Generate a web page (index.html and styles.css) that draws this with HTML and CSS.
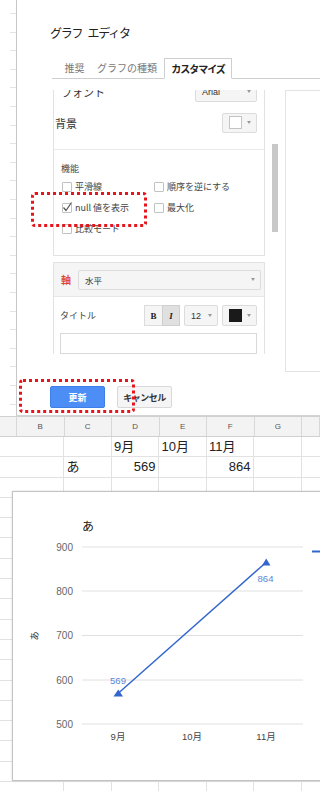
FILE: index.html
```html
<!DOCTYPE html>
<html lang="ja">
<head>
  <meta charset="UTF-8">
  <title>グラフ エディタ</title>
  <link rel="stylesheet" href="styles.css">
</head>
<body>
  <div class="page">

    <!-- dialog over the sheet -->
    <div class="top">
      <div class="sheet-edge"></div>
      <div class="editor">
        <div class="editor-title">グラフ<span class="gap"></span>エディタ</div>

        <div class="tabs">
          <div class="tab tab-1">推奨</div>
          <div class="tab tab-2">グラフの種類</div>
          <div class="tab active">カスタマイズ</div>
        </div>

        <div class="editor-body">
          <div class="panel">
            <div class="panel-scroll">

              <!-- general section -->
              <div class="section section-first">
                <div class="section-top">
                  <div class="row">
                    <span class="row-label big">フォント</span>
                    <div class="select select-font">Arial<i class="caret"></i></div>
                  </div>
                  <div class="row">
                    <span class="row-label big tight">背景</span>
                    <div class="select select-color"><span class="swatch"></span><i class="caret"></i></div>
                  </div>
                </div>
                <div class="features">
                  <div class="features-title">機能</div>
                  <div class="checks">
                    <div class="check"><span class="box"></span>平滑線</div>
                    <div class="check"><span class="box"></span>順序を逆にする</div>
                    <div class="check">
                      <span class="box">
                        <svg width="11" height="11" viewBox="0 0 11 11"><path d="M1.5 5.5 L4 8.5 L9.5 0.5" fill="none" stroke="#555" stroke-width="1.2"/></svg>
                      </span>null 値を表示
                    </div>
                    <div class="check"><span class="box"></span>最大化</div>
                    <div class="check"><span class="box"></span>比較モード</div>
                  </div>
                </div>
              </div>

              <!-- axis section -->
              <div class="section section-axis">
                <div class="axis-head">
                  <span class="axis-label">軸</span>
                  <div class="select select-axis">水平<i class="caret"></i></div>
                </div>
                <div class="axis-body">
                  <div class="title-row">
                    <span class="row-label">タイトル</span>
                    <div class="tools">
                      <div class="tool-group">
                        <span class="tool tool-b">B</span>
                        <span class="tool tool-i on">I</span>
                      </div>
                      <div class="select select-size">12<i class="caret"></i></div>
                      <div class="select select-color"><span class="swatch black"></span><i class="caret"></i></div>
                    </div>
                  </div>
                  <div class="text-input"></div>
                </div>
              </div>

            </div>
            <div class="scrollbar"><div class="thumb"></div></div>
          </div>
          <div class="preview"></div>
        </div>

        <div class="buttons">
          <div class="btn btn-primary">更新</div>
          <div class="btn btn-default">キャンセル</div>
        </div>
      </div>
    </div>

    <!-- spreadsheet -->
    <div class="sheet">
      <div class="sheet-head">
        <span></span><span>B</span><span>C</span><span>D</span><span>E</span><span>F</span><span>G</span><span></span>
      </div>
      <div class="sheet-body">
        <div class="sheet-row">
          <span></span><span></span><span></span><span>9月</span><span>10月</span><span>11月</span><span></span><span></span>
        </div>
        <div class="sheet-row">
          <span></span><span></span><span>あ</span><span class="num">569</span><span></span><span class="num">864</span><span></span><span></span>
        </div>
      </div>
    </div>

    <!-- chart floating over the sheet -->
    <div class="chart">
      <svg width="330" height="288" viewBox="0 0 330 288">
        <text class="chart-title" x="69" y="38.5">あ</text>

        <g stroke="#e0e0e0" stroke-width="1">
          <line x1="69" y1="55" x2="290" y2="55"/>
          <line x1="69" y1="99" x2="290" y2="99"/>
          <line x1="69" y1="143.5" x2="290" y2="143.5"/>
          <line x1="69" y1="188" x2="290" y2="188"/>
          <line x1="69" y1="232" x2="290" y2="232"/>
        </g>

        <g class="y-labels" text-anchor="end">
          <text x="60" y="58.5">900</text>
          <text x="60" y="102.5">800</text>
          <text x="60" y="147">700</text>
          <text x="60" y="191.5">600</text>
          <text x="60" y="235.5">500</text>
        </g>

        <text class="axis-title" x="22" y="147" text-anchor="middle" transform="rotate(-90 22 144)">あ</text>

        <g class="x-labels" text-anchor="middle">
          <text x="105" y="247.5">9月</text>
          <text x="179" y="247.5">10月</text>
          <text x="253" y="247.5">11月</text>
        </g>

        <line x1="105" y1="201.5" x2="253" y2="70.5" stroke="#3366cc" stroke-width="1.5"/>
        <polygon points="100.5,204.5 110,204.5 105.3,197.5" fill="#3366cc"/>
        <polygon points="249,73.5 257.5,73.5 253.2,66.5" fill="#3366cc"/>

        <g class="point-labels" text-anchor="middle">
          <text x="105" y="191.5">569</text>
          <text x="252.5" y="89.5">864</text>
        </g>

        <line x1="299" y1="59.5" x2="312" y2="59.5" stroke="#3366cc" stroke-width="2"/>
      </svg>
    </div>

    <!-- red dotted highlights -->
    <div class="mark mark-null"></div>
    <div class="mark mark-update"></div>
  </div>
</body>
</html>
```

FILE: styles.css
```css
/* ===============================
   BASE
=============================== */
html, body {
  margin: 0;
  padding: 0;
  background: #fff;
}
body {
  width: 320px;
  height: 791px;
  overflow: hidden;
  font-family: "Noto Sans CJK JP", "Liberation Sans", sans-serif;
  color: #333;
}
.page {
  position: relative;
  width: 320px;
  height: 791px;
  overflow: hidden;
}

/* ===============================
   DIALOG
=============================== */
.top {
  display: flex;
  height: 416px;
}
.sheet-edge {
  width: 16px;
  background: repeating-linear-gradient(to bottom, transparent 0 13px, #e3e3e3 13px 14px, transparent 14px 18.6px) right top / 6px 100% no-repeat;
}
.editor {
  flex: 1;
  display: flex;
  flex-direction: column;
  padding-left: 33px;
  border-left: 1px solid #c9c9c9;
  border-bottom: 1px solid #d4d4d4;
  box-sizing: border-box;
}
.editor-title {
  display: flex;
  margin-top: 25px;
  height: 16px;
  line-height: 16px;
  font-size: 12px;
  letter-spacing: -1.2px;
  color: #222;
}
.editor-title .gap {
  width: 5px;
}

/* tabs */
.tabs {
  display: flex;
  align-items: flex-end;
  margin-top: 17px;
  margin-left: 2px;
  height: 21px;
  border-bottom: 1px solid #cfcfcf;
  box-sizing: border-box;
}
.tab {
  height: 20px;
  line-height: 20px;
  font-size: 10px;
  color: #777;
  text-align: center;
}
.tab-1 {
  margin-left: 4px;
  width: 37px;
}
.tab-2 {
  width: 68px;
}
.tab.active {
  width: 68px;
  height: 21px;
  margin-left: 3px;
  margin-bottom: -1px;
  border: 1px solid #cfcfcf;
  border-bottom-color: #fff;
  box-sizing: border-box;
  line-height: 19px;
  background: #fff;
  font-weight: bold;
  letter-spacing: -1px;
  color: #222;
}

/* body : settings panel + preview */
.editor-body {
  display: flex;
  margin-top: 11px;
  margin-left: 3px;
  height: 282px;
}
.panel {
  width: 227px;
  display: flex;
  overflow: hidden;
}
.panel-scroll {
  width: 212px;
  flex: none;
}
.scrollbar {
  width: 15px;
  padding-left: 7px;
  box-sizing: border-box;
}
.thumb {
  width: 6px;
  height: 88px;
  margin-top: 54px;
  background: #c8c8c8;
}
.preview {
  flex: 1;
  margin-left: 5px;
  border: 1px solid #e3e3e3;
  border-right: none;
}

/* sections */
.section {
  border-left: 1px solid #e2e2e2;
  border-right: 1px solid #e2e2e2;
}
.section-first {
  margin-top: -14px;
  border-bottom: 1px solid #e2e2e2;
}
.section-top {
  padding: 0 7px 11px 7px;
  border-bottom: 1px solid #ebebeb;
}
.row {
  display: flex;
  align-items: center;
  justify-content: space-between;
  height: 31px;
}
.row-label {
  font-size: 9px;
  color: #444;
}
.row-label.big {
  font-size: 11px;
  color: #333;
}
.row-label.tight {
  margin-left: -6px;
}

.select {
  display: flex;
  align-items: center;
  justify-content: space-between;
  height: 20px;
  padding: 0 5px 0 6px;
  box-sizing: border-box;
  background: #f5f5f5;
  border: 1px solid #dcdcdc;
  border-radius: 2px;
  font-family: "Liberation Sans", "Noto Sans CJK JP", sans-serif;
  font-size: 9px;
  color: #333;
}
.caret {
  width: 0;
  height: 0;
  border-top: 3px solid #999;
  border-left: 2px solid transparent;
  border-right: 2px solid transparent;
}
.select-font {
  width: 62px;
}
.select-color {
  width: 35px;
  padding-left: 6px;
}
.swatch {
  width: 11px;
  height: 11px;
  background: #fff;
  border: 1px solid #c4c4c4;
}
.swatch.black {
  background: #1a1a1a;
  border-color: #1a1a1a;
}

.features {
  padding: 12px 0 16px 7px;
}
.features-title {
  height: 14px;
  line-height: 14px;
  font-size: 9px;
  color: #444;
}
.checks {
  display: grid;
  grid-template-columns: 92px 1fr;
  grid-auto-rows: 21px;
}
.check {
  display: flex;
  align-items: center;
  gap: 3px;
  font-size: 9px;
  color: #444;
}
.box {
  position: relative;
  width: 10px;
  height: 10px;
  margin-left: 1px;
  border: 1px solid #c2c2c2;
  border-radius: 1px;
  box-sizing: border-box;
  background: #fff;
}
.box svg {
  position: absolute;
  left: -1px;
  top: -2px;
}

/* axis section */
.section-axis {
  margin-top: 6px;
  border-top: 1px solid #e2e2e2;
}
.axis-head {
  display: flex;
  align-items: center;
  gap: 7px;
  height: 34px;
  padding: 0 3px 0 7px;
  box-sizing: border-box;
  background: #f5f5f5;
  border-bottom: 1px solid #e8e8e8;
}
.axis-label {
  font-size: 10px;
  font-weight: bold;
  color: #dd4b39;
}
.select-axis {
  flex: 1;
  font-family: "Noto Sans CJK JP", sans-serif;
  font-size: 8.5px;
}
.axis-body {
  padding: 8px 7px 0 6px;
}
.title-row {
  display: flex;
  align-items: center;
  justify-content: space-between;
  height: 21px;
}
.tools {
  display: flex;
  gap: 4px;
}
.tool-group {
  display: flex;
}
.tool {
  width: 19px;
  height: 21px;
  box-sizing: border-box;
  display: flex;
  align-items: center;
  justify-content: center;
  background: #f5f5f5;
  border: 1px solid #dcdcdc;
  font-family: "Liberation Serif", serif;
  font-size: 9px;
  font-weight: bold;
  color: #222;
}
.tool-i {
  width: 18px;
  margin-left: -1px;
  font-style: italic;
}
.tool.on {
  background: #e0e0e0;
  border-color: #cfcfcf;
}
.select-size {
  width: 34px;
  height: 21px;
}
.title-row .select-color {
  height: 21px;
}
.text-input {
  margin-top: 7px;
  height: 21px;
  border: 1px solid #d9d9d9;
  box-sizing: border-box;
}

/* buttons */
.buttons {
  display: flex;
  gap: 12px;
  margin-top: 14px;
}
.btn {
  width: 55px;
  height: 22px;
  box-sizing: border-box;
  display: flex;
  align-items: center;
  justify-content: center;
  border-radius: 2px;
  font-size: 9px;
  font-weight: bold;
}
.btn-primary {
  background: #4d8ef6;
  border: 1px solid #3c7fe9;
  color: #fff;
}
.btn-default {
  background: #f5f5f5;
  border: 1px solid #d9d9d9;
  color: #333;
  letter-spacing: -0.5px;
}

/* ===============================
   SHEET
=============================== */
.sheet {
  height: 375px;
}
.sheet-head,
.sheet-row {
  display: grid;
  grid-template-columns: 17px repeat(6, 47.5px) 1fr;
}
.sheet-head {
  height: 21px;
  background: #f3f3f3;
  border-top: 1px solid #d0d0d0;
  border-bottom: 1px solid #d0d0d0;
  box-sizing: border-box;
}
.sheet-head span {
  border-right: 1px solid #d8d8d8;
  line-height: 19px;
  text-align: center;
  font-family: "Liberation Sans", sans-serif;
  font-size: 8px;
  color: #555;
}
.sheet-body {
  height: 354px;
  background-image:
    repeating-linear-gradient(to right, transparent 0 46.5px, #e2e2e2 46.5px 47.5px),
    repeating-linear-gradient(to bottom, transparent 0 19.3px, #e2e2e2 19.3px 20.3px);
  background-position: 17px 0, 0 0;
}
.sheet-row {
  height: 20.3px;
  line-height: 19px;
  font-family: "Liberation Sans", "Noto Sans CJK JP", sans-serif;
  font-size: 13px;
  color: #222;
}
.sheet-row span {
  padding-left: 2px;
  white-space: nowrap;
}
.sheet-row .num {
  text-align: right;
  padding-right: 4px;
}

/* ===============================
   CHART
=============================== */
.chart {
  position: absolute;
  left: 12px;
  top: 491px;
  width: 330px;
  height: 290px;
  border: 1px solid #c3c3c3;
  box-sizing: border-box;
  box-shadow: 0 0 2px rgba(0, 0, 0, 0.15);
  background: #fff;
}
.chart svg {
  display: block;
  font-family: "Liberation Sans", "Noto Sans CJK JP", sans-serif;
}
.chart-title {
  font-size: 12px;
  fill: #222;
}
.y-labels text {
  font-size: 10px;
  fill: #666;
}
.axis-title {
  font-size: 9px;
  fill: #333;
}
.x-labels text {
  font-size: 9.5px;
  fill: #444;
}
.point-labels text {
  font-size: 9.5px;
  fill: #5b86d9;
}

/* ===============================
   RED DOTTED MARKS
=============================== */
.mark {
  position: absolute;
  border: 3px dotted #e8141b;
  border-radius: 4px;
  box-sizing: border-box;
}
.mark-null {
  left: 31px;
  top: 192px;
  width: 116px;
  height: 35px;
}
.mark-update {
  left: 19px;
  top: 379px;
  width: 116px;
  height: 34px;
}
```
